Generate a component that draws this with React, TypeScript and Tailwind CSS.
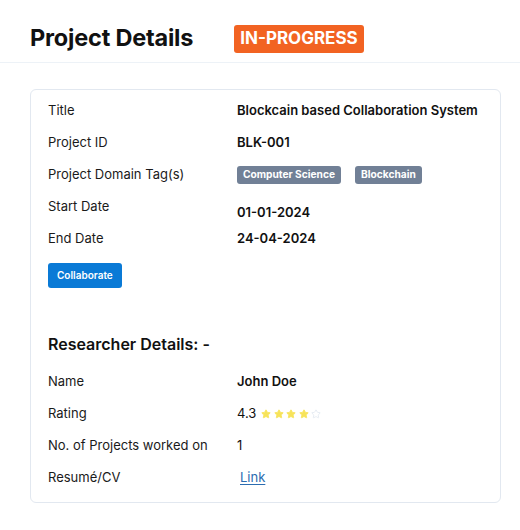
import { Star } from 'lucide-react';

const project = [
  { label: 'Title', value: 'Blockcain based Collaboration System' },
  { label: 'Project ID', value: 'BLK-001' },
];

function Row({
  label,
  children,
  valueClass = 'font-semibold',
}: {
  label: string;
  children: React.ReactNode;
  valueClass?: string;
}) {
  return (
    <div className="flex h-8 items-center">
      <div className="w-[189px] shrink-0 text-[13px] text-[#1a1a1a]">{label}</div>
      <div className={`text-[13px] text-[#111] ${valueClass}`}>{children}</div>
    </div>
  );
}

export default function App() {
  return (
    <div className="min-h-[530px] w-[520px] bg-white font-['Inter',sans-serif] text-[#111]">
      {/* header */}
      <div className="flex h-[63px] items-center gap-[41px] border-b border-[#edf2f7] pl-[30px] pt-[14px]">
        <h1 className="text-[23.5px] font-bold tracking-[-0.2px]">Project Details</h1>
        <span className="mt-[2px] rounded-[3px] bg-[#f26322] px-[6px] py-[1px] text-[17px] font-bold text-white">IN-PROGRESS</span>
      </div>

      <div className="px-[30px] pt-[26px]">
        <div className="w-[471px] rounded-md border border-[#e2e8f0] px-[17px] pb-[8px] pt-[5px]">
          {project.map((r) => (
            <Row key={r.label} label={r.label}>
              {r.value}
            </Row>
          ))}
          <Row label="Project Domain Tag(s)">
            <div className="flex gap-[14px]">
              <span className="rounded-[3px] bg-[#718096] px-[6px] py-[1px] text-[10.2px] font-bold text-white">Computer Science</span>
              <span className="rounded-[3px] bg-[#718096] px-[6px] py-[1px] text-[10.2px] font-bold text-white">Blockchain</span>
            </div>
          </Row>
          <Row label="Start Date" valueClass="mt-3 font-semibold">
            01-01-2024
          </Row>
          <Row label="End Date">24-04-2024</Row>
          <button className="mt-2 rounded-[3px] bg-[#0a7ad6] px-[9px] py-[5px] text-[10px] font-semibold text-white">Collaborate</button>

          <h2 className="mt-[44px] text-[16px] font-semibold">Researcher Details: -</h2>
          <div className="mt-[10px]">
            <Row label="Name">John Doe</Row>
            <Row label="Rating" valueClass="font-normal">
              <span className="flex items-center gap-[5px]">
                4.3
                <span className="flex gap-[2.5px]">
                  {[0, 1, 2, 3].map((i) => (
                    <Star key={i} size={10} className="fill-[#f7e35a] text-[#f7e35a]" />
                  ))}
                  <Star size={10} className="text-[#e2e8f0]" />
                </span>
              </span>
            </Row>
            <Row label="No. of Projects worked on" valueClass="font-normal">1</Row>
            <Row label="Resumé/CV" valueClass="font-normal">
              <a href="#" className="ml-[3px] text-[#2b6cb0] underline underline-offset-2">Link</a>
            </Row>
          </div>
        </div>
      </div>
    </div>
  );
}
